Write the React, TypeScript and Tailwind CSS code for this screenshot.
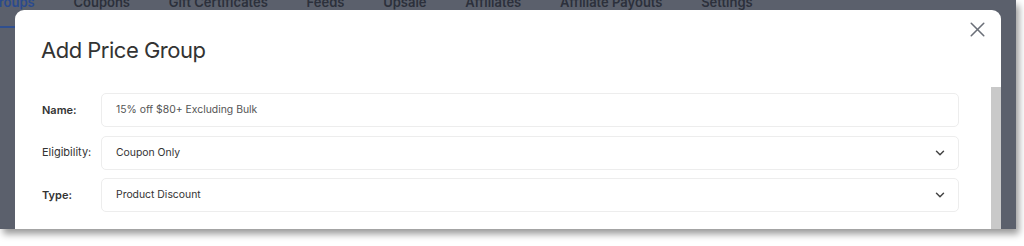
import { ChevronDown, X } from "lucide-react";

const tabs = [
  { label: "Groups", active: true },
  { label: "Coupons" },
  { label: "Gift Certificates" },
  { label: "Feeds" },
  { label: "Upsale" },
  { label: "Affiliates" },
  { label: "Affiliate Payouts" },
  { label: "Settings" },
];

function Field({
  label,
  value,
  bold,
  select,
}: {
  label: string;
  value: string;
  bold?: boolean;
  select?: boolean;
}) {
  return (
    <div className="flex items-center">
      <div
        className={`w-[59px] shrink-0 text-[11px] text-[#333] ${
          bold ? "font-semibold" : "font-normal"
        }`}
      >
        {label}
      </div>
      <div className="flex h-[34px] w-[858px] items-center justify-between rounded-[5px] border border-[#ededed] bg-white pl-[14px] pr-[11px]">
        <span className={`text-[10.4px] ${select ? "text-[#333]" : "text-[#555]"}`}>
          {value}
        </span>
        {select && <ChevronDown size={14} strokeWidth={2.5} className="text-[#444]" />}
      </div>
    </div>
  );
}

export default function App() {
  return (
    <div className="h-[246px] w-[1024px] bg-white font-['Inter',sans-serif]">
      <div className="relative h-[229px] w-[1016px] overflow-hidden bg-[#5b606c] shadow-[3px_5px_7px_rgba(0,0,0,0.4)]">
        {/* page behind the overlay */}
        <div className="-ml-[11px] -mt-[8px] flex gap-[38.7px] text-[13px] font-semibold text-[#2c303b]">
          {tabs.map((t) => (
            <div key={t.label} className={`leading-[20px] ${t.active ? "text-[#2a4a8e]" : ""}`}>
              {t.label}
            </div>
          ))}
        </div>
        <div className="mt-[14px] h-[2px] w-[18px] bg-[#2f4f8f]" />

        {/* modal */}
        <div className="absolute left-[15px] top-[10px] h-[240px] w-[986px] rounded-t-[9px] bg-white">
          <button className="absolute right-[11px] top-[7px] text-[#6b6f78]">
            <X size={25} strokeWidth={1.5} />
          </button>
          <div className="absolute right-0 top-[77px] h-[170px] w-[10px] bg-[#c9c9c9]" />
          <div className="pl-[26px] pt-[26px]">
            <h2 className="text-[22px] font-normal leading-[28px] tracking-[-0.5px] text-[#333]">
              Add Price Group
            </h2>
            <div className="mt-[29px] flex flex-col gap-[8.5px] pl-px">
              <Field label="Name:" value="15% off $80+ Excluding Bulk" bold />
              <Field label="Eligibility:" value="Coupon Only" select />
              <Field label="Type:" value="Product Discount" bold select />
            </div>
          </div>
        </div>
      </div>
    </div>
  );
}
